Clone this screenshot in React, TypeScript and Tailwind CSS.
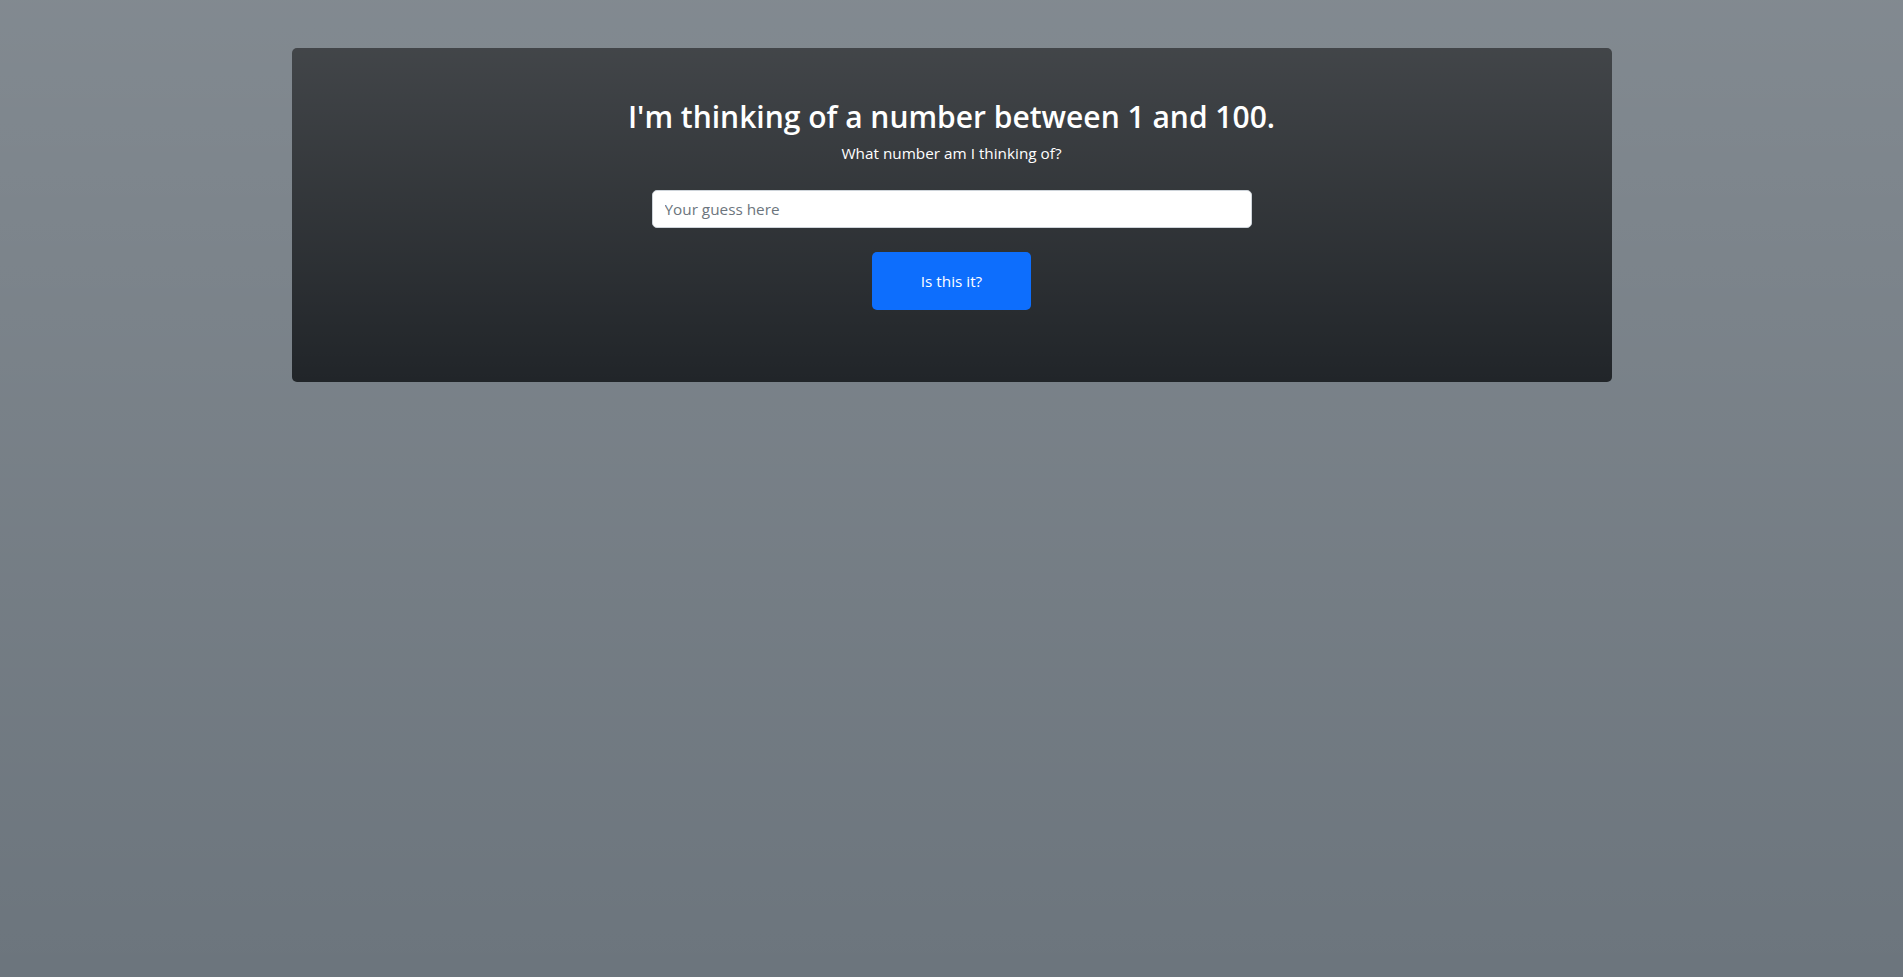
import { useState } from 'react'

// Juego de adivinar el número: tarjeta oscura centrada sobre fondo gris
export default function App() {
  const [guess, setGuess] = useState('')

  return (
    <div
      className="min-h-screen bg-[#6c757d] bg-[linear-gradient(180deg,rgba(255,255,255,0.15),rgba(255,255,255,0))] pt-12"
      style={{ fontFamily: '"Open Sans", "Noto Sans", Arial, sans-serif' }}
    >
      <div className="mx-auto w-[1320px] h-[334px] rounded-[5px] bg-[#212529] bg-[linear-gradient(180deg,rgba(255,255,255,0.15),rgba(255,255,255,0))] text-center text-white pt-[51px]">
        <h2 className="text-[30px] font-semibold leading-[36px]">
          I'm thinking of a number between 1 and 100.
        </h2>
        <p className="mt-[6px] text-[15.3px] leading-6">What number am I thinking of?</p>

        <div className="mt-[25px] flex justify-center">
          <input
            type="text"
            value={guess}
            onChange={(e) => setGuess(e.target.value)}
            placeholder="Your guess here"
            className="w-[600px] h-[38px] rounded-[5px] border border-[#ced4da] bg-white px-3 text-[15.3px] text-[#212529] placeholder:text-[#6c757d] outline-none"
          />
        </div>

        <div className="mt-6 flex justify-center">
          <button className="w-[159px] h-[58px] rounded-[5px] bg-[#0d6efd] text-[15.3px] text-white">
            Is this it?
          </button>
        </div>
      </div>
    </div>
  )
}
